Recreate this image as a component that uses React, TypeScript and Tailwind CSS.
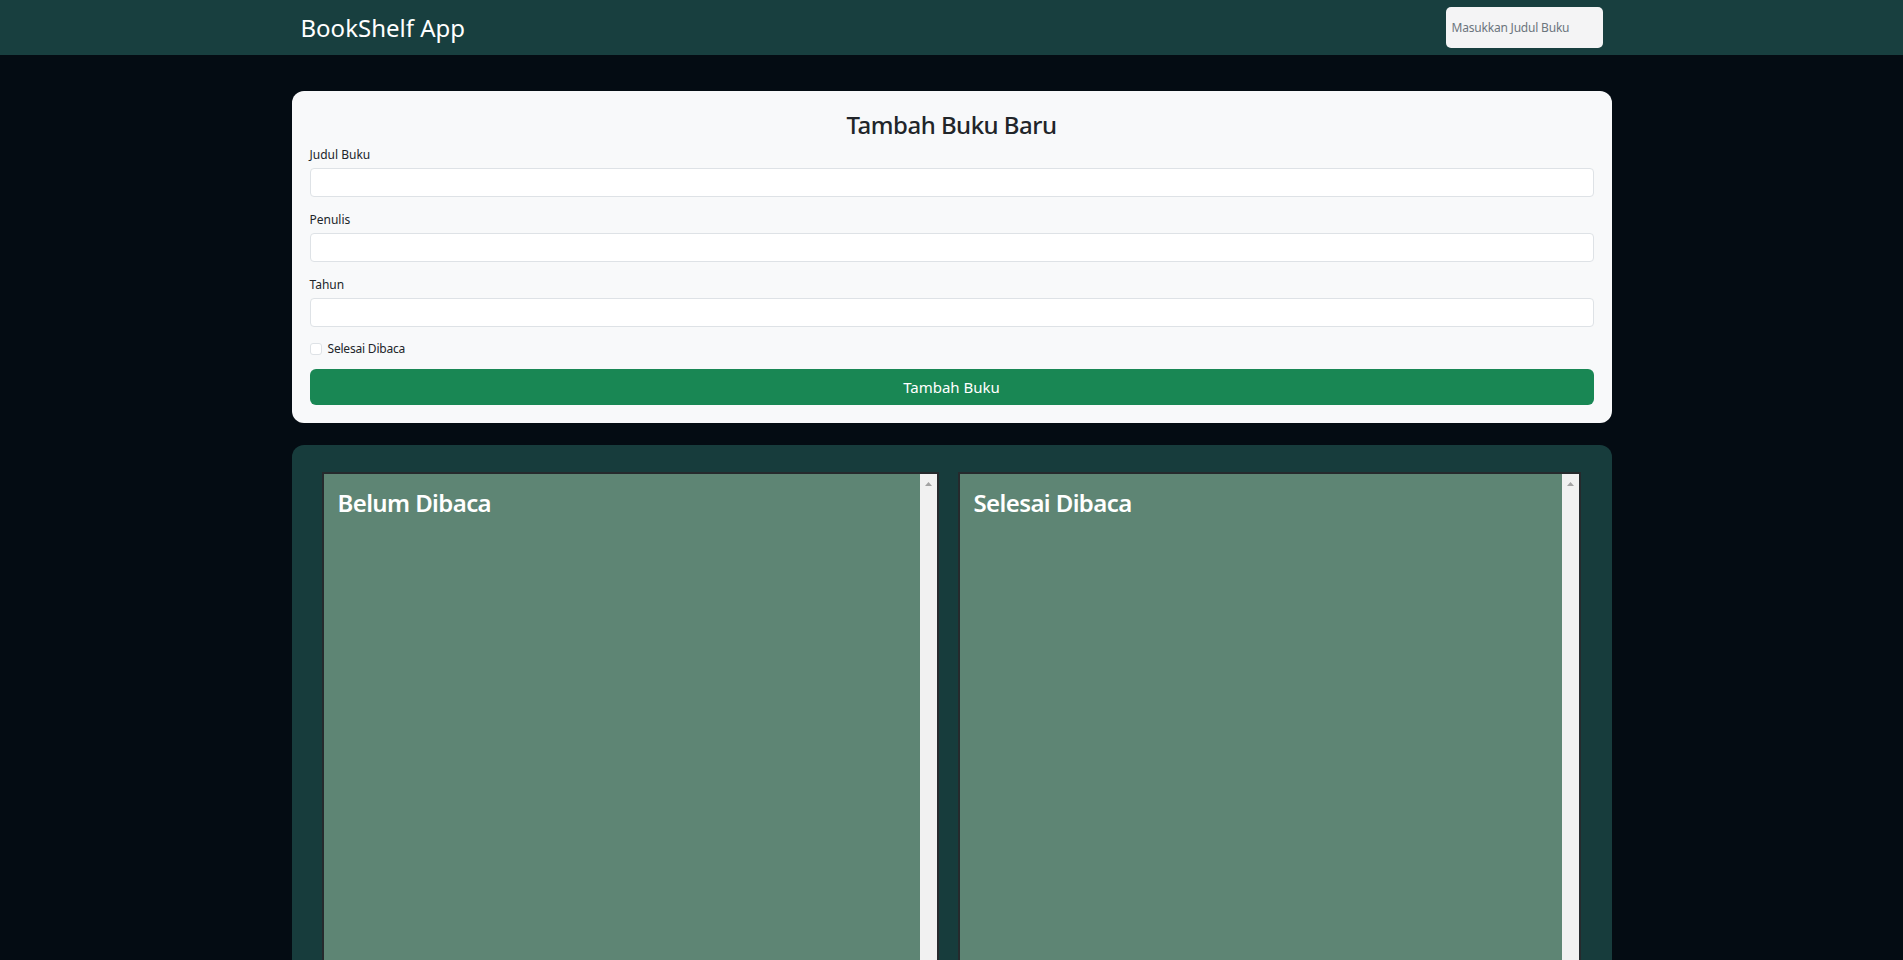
import React from 'react';

const ScrollTrack: React.FC = () => (
  <div className="w-[17px] shrink-0 bg-[#f1f1f1] flex justify-center pt-[8px]">
    <svg width="7" height="4" viewBox="0 0 7 4">
      <polygon points="3.5,0 7,4 0,4" fill="#a3a3a3" />
    </svg>
  </div>
);

const Shelf: React.FC<{ title: string }> = ({ title }) => (
  <div className="h-[620px] border-2 border-[#262a2d] bg-[#5e8574] flex">
    <div className="flex-1 pl-[14px] pt-[14px]">
      <h2 className="text-[24px] leading-[29px] font-semibold tracking-[-0.6px] text-white">{title}</h2>
    </div>
    <ScrollTrack />
  </div>
);

const Field: React.FC<{ label: string; first?: boolean }> = ({ label, first }) => (
  <div className={first ? 'mt-[7px]' : 'mt-[14px]'}>
    <label className="block text-[12px] leading-[18px] text-[#212529]">{label}</label>
    <input
      type="text"
      className="mt-[4px] block w-full h-[29px] rounded-[4px] border border-[#dee2e6] bg-white px-3 text-[14px] outline-none"
    />
  </div>
);

export default function App() {
  return (
    <div className="min-h-screen bg-[#040c13] font-['Noto_Sans',sans-serif] pb-10">
      <header className="h-[55px] bg-[#183f3f]">
        <div className="mx-auto w-[1320px] h-full px-[9px] flex items-center justify-between">
          <span className="text-[24px] leading-[29px] text-white">BookShelf App</span>
          <input
            type="text"
            placeholder="Masukkan Judul Buku"
            className="w-[157px] h-[41px] rounded-[5px] bg-[#f4f4f5] px-[6px] text-[12px] tracking-[-0.2px] text-[#212529] placeholder:text-[#6c757d] outline-none"
          />
        </div>
      </header>

      <main className="mx-auto w-[1320px]">
        <section className="mt-[36px] rounded-[12px] bg-[#f8f9fa] px-[18px] pt-[19px] pb-[18px]">
          <h1 className="text-center text-[24px] leading-[29px] font-medium tracking-[-0.5px] text-[#212529]">
            Tambah Buku Baru
          </h1>
          <Field label="Judul Buku" first />
          <Field label="Penulis" />
          <Field label="Tahun" />
          <div className="mt-[13px] h-[18px] flex items-center gap-[6px]">
            <input
              type="checkbox"
              className="appearance-none w-[12px] h-[12px] rounded-[3px] border border-[#dee2e6] bg-white"
            />
            <span className="text-[12px] leading-[18px] tracking-[-0.2px] text-[#212529]">Selesai Dibaca</span>
          </div>
          <button className="mt-[11px] w-full h-[36px] rounded-[6px] bg-[#198754] text-white text-[15px]">
            Tambah Buku
          </button>
        </section>

        <section className="mt-[22px] rounded-[12px] bg-[#173c3c] pt-[27px] pl-[30px] pr-[31px] pb-[30px]">
          <div className="grid grid-cols-[617px_623px] gap-[19px]">
            <Shelf title="Belum Dibaca" />
            <Shelf title="Selesai Dibaca" />
          </div>
        </section>
      </main>
    </div>
  );
}
